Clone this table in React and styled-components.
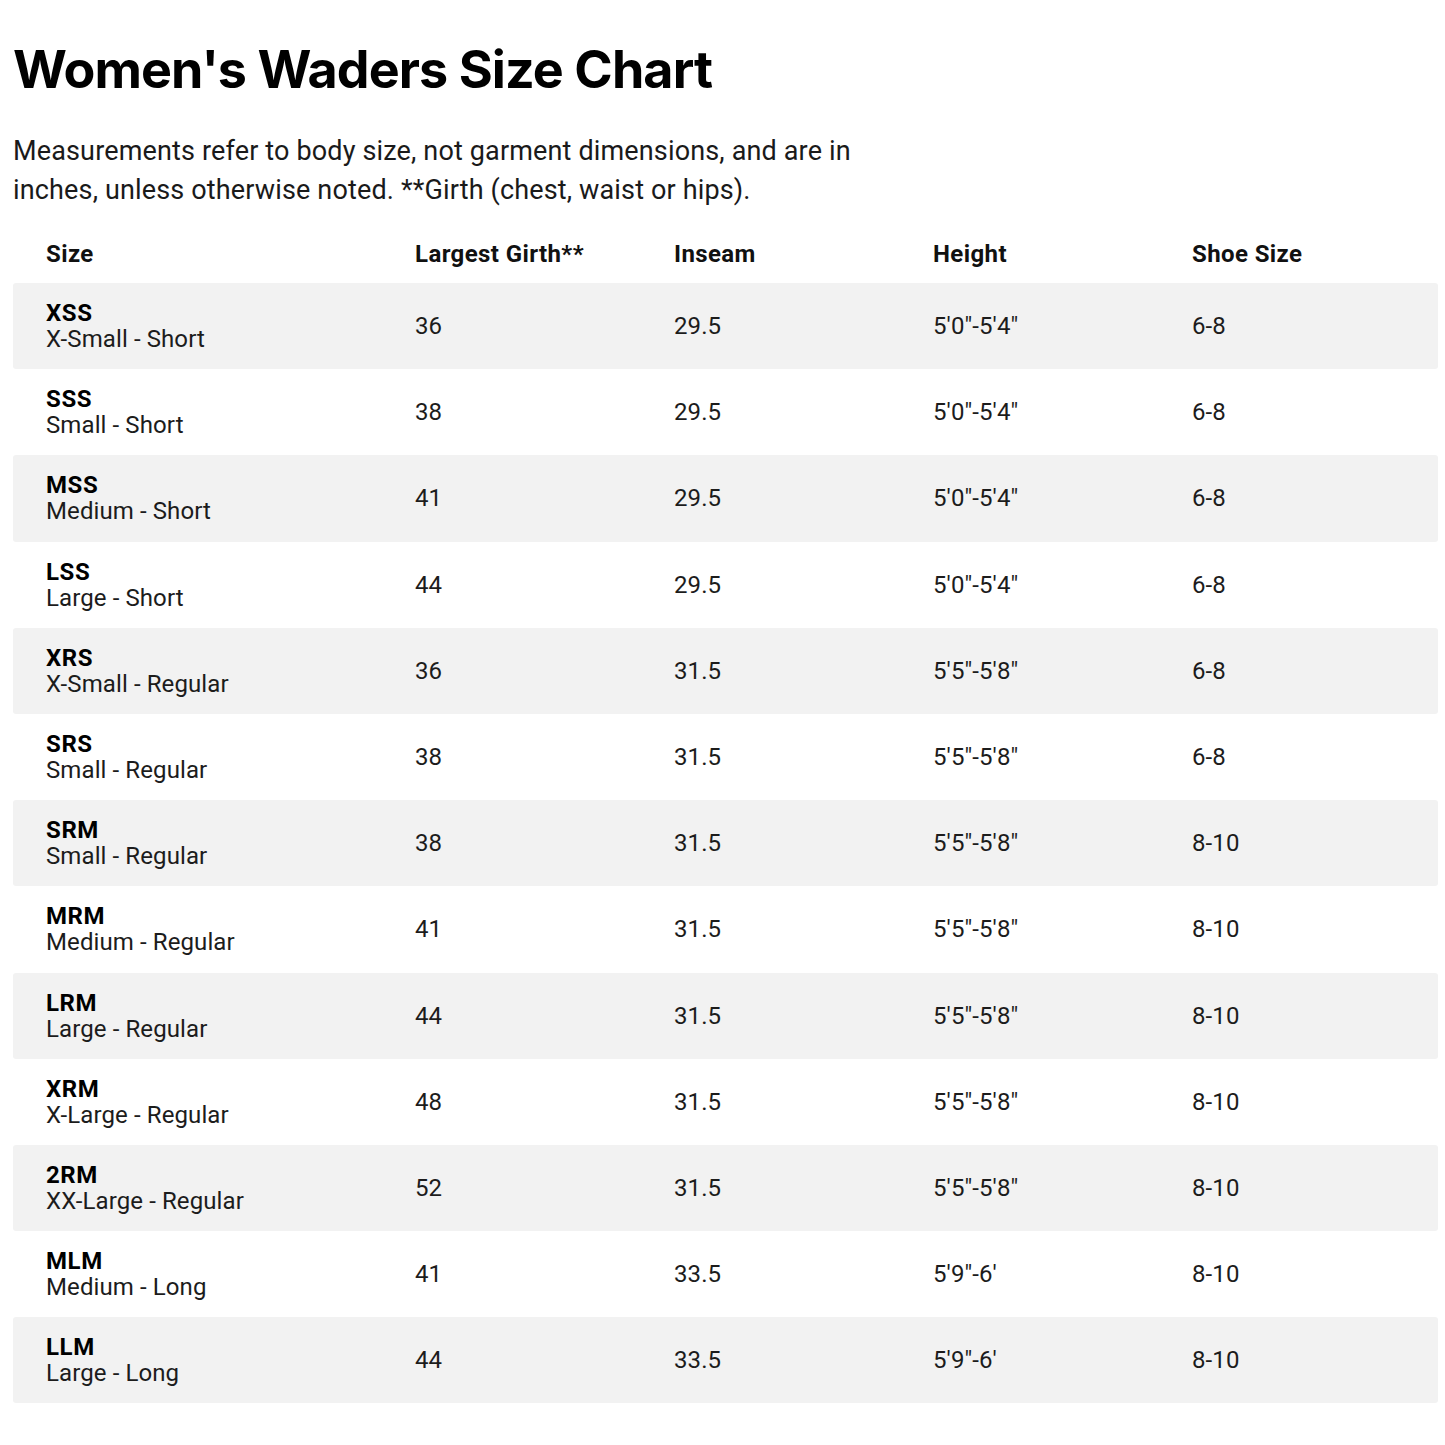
import React from "react";
import styled, { createGlobalStyle } from "styled-components";

const Global = createGlobalStyle`
  html, body { margin: 0; padding: 0; background: #fff; }
  body { font-family: Roboto, "Liberation Sans", Arial, sans-serif; color: #111; }
`;

const Page = styled.main`
  padding: 37px 7px 40px 13px;
`;

const Title = styled.h1`
  margin: 0;
  font-family: Inter, "Liberation Sans", Arial, sans-serif;
  font-weight: 700;
  font-size: 52px;
  line-height: 66px;
  letter-spacing: -0.9px;
  color: #000;
`;

const Intro = styled.p`
  margin: 29px 0 0;
  font-size: 27px;
  line-height: 39px;
  letter-spacing: 0.15px;
  color: #1a1a1a;
  max-width: 875px;
`;

const Table = styled.div`
  margin-top: 15px;
  display: flex;
  flex-direction: column;
`;

const Row = styled.div`
  display: grid;
  grid-template-columns: 369px 259px 259px 259px 1fr;
  align-items: center;
  height: ${(p) => (p.$head ? "58px" : "86.2px")};
  background: ${(p) => (p.$shaded ? "#f2f2f2" : "transparent")};
  border-radius: 3px;
`;

const HeadCell = styled.div`
  padding-left: 33px;
  font-weight: 700;
  font-size: 24px;
  letter-spacing: 0.4px;
  color: #111;
`;

const Cell = styled.div`
  padding-left: 33px;
  font-size: 24px;
  letter-spacing: 0.1px;
  color: #1c1c1c;
`;

const SizeCell = styled.div`
  padding-left: 33px;
  display: flex;
  flex-direction: column;
`;

const Code = styled.span`
  font-weight: 700;
  font-size: 24px;
  line-height: 28px;
  letter-spacing: 0.6px;
  color: #000;
`;

const Name = styled.span`
  font-size: 24px;
  line-height: 28px;
  margin-top: -2px;
  letter-spacing: 0.1px;
  color: #1c1c1c;
`;

const rows = [
  ["XSS", "X-Small - Short", "36", "29.5", "5′0″-5′4″", "6-8"],
  ["SSS", "Small - Short", "38", "29.5", "5′0″-5′4″", "6-8"],
  ["MSS", "Medium - Short", "41", "29.5", "5′0″-5′4″", "6-8"],
  ["LSS", "Large - Short", "44", "29.5", "5′0″-5′4″", "6-8"],
  ["XRS", "X-Small - Regular", "36", "31.5", "5′5″-5′8″", "6-8"],
  ["SRS", "Small - Regular", "38", "31.5", "5′5″-5′8″", "6-8"],
  ["SRM", "Small - Regular", "38", "31.5", "5′5″-5′8″", "8-10"],
  ["MRM", "Medium - Regular", "41", "31.5", "5′5″-5′8″", "8-10"],
  ["LRM", "Large - Regular", "44", "31.5", "5′5″-5′8″", "8-10"],
  ["XRM", "X-Large - Regular", "48", "31.5", "5′5″-5′8″", "8-10"],
  ["2RM", "XX-Large - Regular", "52", "31.5", "5′5″-5′8″", "8-10"],
  ["MLM", "Medium - Long", "41", "33.5", "5′9″-6′", "8-10"],
  ["LLM", "Large - Long", "44", "33.5", "5′9″-6′", "8-10"],
];

export default function App() {
  return (
    <>
      <Global />
      <Page>
        <Title>Women's Waders Size Chart</Title>
        <Intro>
          Measurements refer to body size, not garment dimensions, and are in
          inches, unless otherwise noted. **Girth (chest, waist or hips).
        </Intro>
        <Table>
          <Row $head>
            <HeadCell>Size</HeadCell>
            <HeadCell>Largest Girth**</HeadCell>
            <HeadCell>Inseam</HeadCell>
            <HeadCell>Height</HeadCell>
            <HeadCell>Shoe Size</HeadCell>
          </Row>
          {rows.map((r, i) => (
            <Row key={r[0]} $shaded={i % 2 === 0}>
              <SizeCell>
                <Code>{r[0]}</Code>
                <Name>{r[1]}</Name>
              </SizeCell>
              <Cell>{r[2]}</Cell>
              <Cell>{r[3]}</Cell>
              <Cell>{r[4]}</Cell>
              <Cell>{r[5]}</Cell>
            </Row>
          ))}
        </Table>
      </Page>
    </>
  );
}
